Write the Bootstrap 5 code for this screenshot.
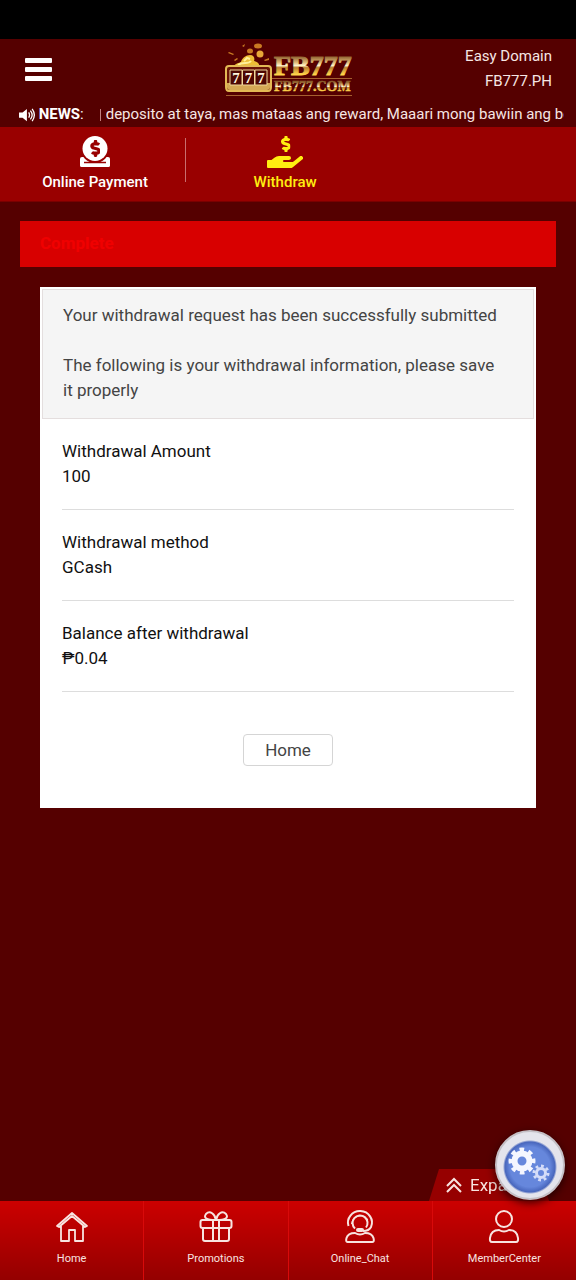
<!DOCTYPE html>
<html lang="en">
<head>
<meta charset="utf-8">
<meta name="viewport" content="width=device-width, initial-scale=1">
<title>Withdraw - FB777</title>
<link href="https://cdn.jsdelivr.net/npm/bootstrap@5.3.0/dist/css/bootstrap.min.css" rel="stylesheet">
<style>
  body { background: #550000; font-family: Roboto, "Liberation Sans", sans-serif; font-size: 17px; line-height: 25px; color: #111; }
  svg { display: block; }
  a { text-decoration: none; }
  .device-bar { background: #000; height: 39px; }
  .site-head { color: #f6e6e4; font-size: 15px; }
  .head-row { display: grid; grid-template-columns: 1fr auto 1fr; padding: 5px 24px 0; }
  .head-row a { color: inherit; }
  .menu-btn { padding: 14px 0; }
  .news { height: 25px; padding: 0 12px 0 18px; }
  .news-title { width: 61px; margin-left: 2px; font-weight: 700; color: #fff; }
  .ticker { min-width: 0; }
  .ticker-cut { width: 1px; height: 12px; background: #c08080; margin-right: 5px; }
  .pay-tabs { background: #990000; height: 75px; border-bottom: 1px solid #7a0000; }
  .pay-tabs a { width: 33%; padding-top: 9px; color: #fff; font-size: 15px; font-weight: 500; line-height: 20px; }
  .pay-tabs a.active { color: #ffee11; }
  .pay-tabs .split { width: 1px; height: 44px; background: #c86e6e; margin: 11px 0 0 -5px; }
  .pay-tabs .split + a { margin-left: 4px; }
  .content { padding: 19px 20px 96px; }
  .step-bar { background: #d80000; color: #f00000; font-size: 17px; font-weight: 700; line-height: 25px; padding: 10px 20px; height: 46px; }
  .result { border: 2px solid #fff; border-radius: 0; background: #fff; margin: 20px 20px 0; }
  .result .card-header { background: #f5f5f5; border: 1px solid #e4dede; border-radius: 0; color: #444; padding: 13px 28px 15px 20px; }
  .result .card-header p + p { margin-top: 25px; }
  .result .info-list { margin: 0 20px; }
  .result .info-list > div { border-bottom: 1px solid #ddd; padding: 20px 0; }
  .result dt, .result dd { font-weight: 400; margin: 0; }
  .result-foot { padding: 42px 0 40px; }
  .btn-home { background: #fff; border: 1px solid #d5d5d5; border-radius: 4px; color: #444; font-size: 17px; line-height: 24px; padding: 3px 21px; }
  .dock-link { background: linear-gradient(#cc0000, #940000); border-right: 1px solid #d80a0a; color: #f8e4e0; font-size: 11px; line-height: 16px; height: 79px; padding-top: 8px; }
  .dock-link:last-child { border-right: 0; }
  .expand { background: #960000; border: 0; color: #f8e4e0; font-size: 17px; line-height: 24px; height: 32px; width: 120px; margin-right: 27px; padding: 0 0 0 17px; clip-path: polygon(10px 0, 110px 0, 100% 100%, 0 100%); }
  .gear-btn { width: 70px; height: 70px; right: 11px; bottom: 80px; border-radius: 50%; border: 2px solid #c4c0c6; background: radial-gradient(circle at 50% 53%, #6687dc 0 20px, #4967bd 25px, #e4e4ec 27px); box-shadow: 0 3px 8px rgba(20, 0, 0, .8); }
</style>
</head>
<body>
<svg width="0" height="0" class="position-absolute" aria-hidden="true">
  <defs>
    <linearGradient id="gold" x1="0" y1="0" x2="0" y2="1">
      <stop offset=".2" stop-color="#8a5c2c"/><stop offset=".4" stop-color="#e0ba78"/><stop offset=".5" stop-color="#fff4cc"/><stop offset=".57" stop-color="#bd8030"/><stop offset=".78" stop-color="#ffd44a"/>
    </linearGradient>
    <symbol id="dollar" viewBox="220 0 152 256">
      <path fill="currentColor" d="M271.06,144.3l54.27,14.3a8.59,8.59,0,0,1,6.63,8.1c0,4.6-4.09,8.4-9.12,8.4h-35.6a30,30,0,0,1-11.19-2.2c-5.24-2.2-11.28-1.7-15.3,2l-19,17.5a11.68,11.68,0,0,0-2.25,2.66,11.42,11.42,0,0,0,3.88,15.74,83.77,83.77,0,0,0,34.51,11.5V240c0,8.8,7.83,16,17.37,16h17.37c9.55,0,17.38-7.2,17.38-16V222.4c32.93-3.6,57.84-31,53.5-63-3.15-23-22.46-41.3-46.56-47.7L282.68,97.4a8.59,8.59,0,0,1-6.63-8.1c0-4.6,4.09-8.4,9.12-8.4h35.6A30,30,0,0,1,332,83.1c5.23,2.2,11.28,1.7,15.3-2l19-17.5A11.31,11.31,0,0,0,368.47,61a11.43,11.43,0,0,0-3.84-15.78,83.82,83.82,0,0,0-34.52-11.5V16c0-8.8-7.82-16-17.37-16H295.37C285.82,0,278,7.2,278,16V33.6c-32.89,3.6-57.85,31-53.51,63C227.63,119.6,247,137.9,271.06,144.3Z"/>
    </symbol>
  </defs>
</svg>

<div class="device-bar"></div>

<header class="site-head">
  <div class="head-row">
    <button type="button" class="btn menu-btn border-0 align-self-start text-start" aria-label="Menu">
      <svg width="28" height="24" viewBox="0 0 28 24" fill="#fff"><rect x="1" width="27" height="5" rx="1"/><rect x="1" y="9" width="27" height="5" rx="1"/><rect x="1" y="18" width="27" height="5" rx="1"/></svg>
    </button>
    <a href="#" aria-label="FB777">
      <svg width="128" height="54" viewBox="-1 2 128 54" overflow="visible">
        <g fill="#c97a22"><ellipse cx="33" cy="4" rx="4" ry="2.500"/><ellipse cx="25" cy="9" rx="3" ry="2.500"/><circle cx="35" cy="12" r="3.500" fill="#e8a838"/><path d="M4 10l5 2-1 1-5-2zM17 4l3-2-1 3zM39 18l5-2v2l-4 1zM9 18l3-2 1 1-3 2z"/></g>
        <path d="M9 24c2-3 5-3 7-4 1-4 5-7 9-7 4 0 5 3 4 6 4 1 6 3 5 6z" fill="#edbd35"/>
        <path d="M13 23c5-4 10 0 13-4M19 19l3-3 3 1" fill="none" stroke="#fff09a" stroke-width="2"/>
        <path d="M4 24h39c2 0 3 1 3 3v18c0 3-1 4-3 4H4c-2 0-3-1-3-4V27c0-2 1-3 3-3z" fill="#691306" stroke="#e3b955" stroke-width="2"/>
        <path d="M2 41h43v4q0 3-3 3H5q-3 0-3-3z" fill="#d4a755"/>
        <g fill="#4d0703" stroke="#f0d79a"><path d="M5 28h12v15H5zM17.500 28h12v15h-12zM30 28h12v15H30z"/></g>
        <g fill="#fff8e0" font-family="Liberation Serif, serif" font-size="15" font-weight="700" text-anchor="middle"><text x="11" y="41">7</text><text x="23.500" y="41">7</text><text x="36" y="41">7</text></g>
        <g fill="url(#gold)" stroke="url(#gold)" stroke-width="1" font-family="Liberation Serif, serif" font-weight="700"><text x="49" y="33" font-size="28">FB777</text><text x="49" y="49" font-size="14" stroke-width=".5">FB777.COM</text></g>
        <path d="M47 36.500h80M1 53.500h126" stroke="#a56030"/>
      </svg>
    </a>
    <div class="text-end"><a href="#" class="d-block">Easy Domain</a><a href="#" class="d-block">FB777.PH</a></div>
  </div>
  <div class="news d-flex align-items-center mt-1">
    <svg width="19" height="14" viewBox="0 0 19 16" aria-hidden="true"><path d="M0 5h4l5-4v14l-5-4H0z" fill="#fff"/><path d="M11 5q2 3 0 6M13 3q4 5 0 10M15 1q5 7 0 14" fill="none" stroke="#fff" stroke-width="1.500"/></svg>
    <div class="news-title flex-shrink-0">NEWS<span class="fw-normal">:</span></div>
    <div class="ticker d-flex align-items-center overflow-hidden text-nowrap flex-grow-1"><span class="ticker-cut flex-shrink-0"></span><span class="flex-grow-1 overflow-hidden">deposito at taya, mas mataas ang reward, Maaari mong bawiin ang bo</span></div>
  </div>
</header>

<nav class="pay-tabs d-flex" aria-label="Payments">
  <a href="#" class="d-flex flex-column align-items-center">
    <svg width="32" height="32" viewBox="0 0 32 32" class="mb-1"><path fill="currentColor" d="M3 21h26q2 0 2 2v6q0 2-2 2H3q-2 0-2-2v-6q0-2 2-2z"/><circle cx="16" cy="13" r="14" fill="#900"/><path d="M1 27h30v2q0 2-2 2H3q-2 0-2-2z" fill="currentColor"/><path d="M5 26.500h22" stroke="#900" stroke-width="1.500"/><circle cx="16" cy="12.500" r="12.500" fill="currentColor"/><use href="#dollar" x="11" y="4" width="10" height="17" color="#900"/></svg>
    Online Payment
  </a>
  <span class="split"></span>
  <a href="#" class="active d-flex flex-column align-items-center">
    <svg width="36" height="32" viewBox="0 0 576 512" class="mb-1"><use href="#dollar" x="220" y="0" width="152" height="256"/><path fill="currentColor" d="M565.27,328.1c-11.8-10.7-30.2-10-42.6,0L430.27,402a63.64,63.64,0,0,1-40,14H272a16,16,0,0,1,0-32h78.29c15.9,0,30.71-10.9,33.25-26.6a31.2,31.2,0,0,0,.46-5.46A32,32,0,0,0,352,320H192a117.66,117.66,0,0,0-74.1,26.29L71.4,384H16A16,16,0,0,0,0,400v96a16,16,0,0,0,16,16H372.77a64,64,0,0,0,40-14L564,377a32,32,0,0,0,1.28-48.9Z"/></svg>
    Withdraw
  </a>
</nav>

<main class="content">
  <h1 class="step-bar m-0">Complete</h1>
  <section class="card result">
    <div class="card-header">
      <p class="mb-0">Your withdrawal request has been successfully submitted</p>
      <p class="mb-0">The following is your withdrawal information, please save it properly</p>
    </div>
    <dl class="info-list">
      <div><dt>Withdrawal Amount</dt><dd>100</dd></div>
      <div><dt>Withdrawal method</dt><dd>GCash</dd></div>
      <div><dt>Balance after withdrawal</dt><dd>₱0.04</dd></div>
    </dl>
    <div class="result-foot d-flex justify-content-center"><button type="button" class="btn btn-home">Home</button></div>
  </section>
</main>

<footer class="fixed-bottom">
  <div class="d-flex justify-content-end">
    <button type="button" class="expand d-flex align-items-center text-nowrap">
      <svg width="16" height="16" viewBox="0 0 16 16" fill="none" stroke="currentColor" stroke-width="2" class="me-2"><path d="M1 9l7-7 7 7M1 15l7-7 7 7"/></svg>Expand
    </button>
  </div>
  <nav class="row g-0 text-center" aria-label="Main">
    <a href="#" class="col dock-link d-flex flex-column align-items-center">
      <svg width="34" height="34" viewBox="0 0 34 34" fill="none" stroke="currentColor" stroke-width="2" class="mb-2"><path d="M2 17L17 4l15 13-2 1L17 7 4 18zM6 17v15h8V21h6v11h8V17" stroke-linejoin="round" stroke-width="1.800"/></svg>
      Home
    </a>
    <a href="#" class="col dock-link d-flex flex-column align-items-center">
      <svg width="34" height="34" viewBox="0 0 34 34" fill="none" stroke="currentColor" stroke-width="2" class="mb-2"><rect x="1.500" y="11" width="31" height="8" rx="2"/><path d="M4 19v11q0 2 2 2h22q2 0 2-2V19M14 11v21M20 11v21M16 11C8 11 4 9 7 5c4-4 9 0 10 6 1-6 6-10 10-6 3 4-1 6-9 6"/></svg>
      Promotions
    </a>
    <a href="#" class="col dock-link d-flex flex-column align-items-center">
      <svg width="34" height="34" viewBox="0 0 34 34" fill="none" stroke="currentColor" stroke-width="2" class="mb-2"><path d="M5.500 17A12 11.500 0 1 1 28 18q-2 4-8 4" /><path d="M12 19.500A7.500 7.500 0 1 1 23 18.500"/><path d="M8.500 15A9 9 0 0 1 25 11" stroke-width="1"/><rect x="13" y="19" width="8" height="4" rx="2" fill="currentColor" stroke="none"/><path d="M12 24q-7 0-8.500 5-1 4 1 4h25q2 0 1-4-1.500-5-8.500-5-5 3-10 0z"/></svg>
      Online_Chat
    </a>
    <a href="#" class="col dock-link d-flex flex-column align-items-center">
      <svg width="34" height="34" viewBox="0 0 34 34" fill="none" stroke="currentColor" stroke-width="2" class="mb-2"><circle cx="17" cy="10" r="8"/><path d="M12 21q-8 0-9 8-.5 4 2 4h24q2.500 0 2-4-1-8-9-8-5 3-10 0z"/></svg>
      MemberCenter
    </a>
  </nav>
  <button type="button" class="gear-btn position-absolute p-0" aria-label="Settings">
    <svg width="66" height="66" viewBox="0 0 66 66" fill="none" stroke="#f4f6ff"><circle cx="25" cy="29" r="7.500" stroke-width="6"/><circle cx="25" cy="29" r="11.500" stroke-width="4" pathLength="80" stroke-dasharray="5 5" transform="rotate(-12 25 29)"/><g stroke="#d4dcf8"><circle cx="44" cy="41" r="4.500" stroke-width="3"/><circle cx="44" cy="41" r="7" stroke-width="3" pathLength="80" stroke-dasharray="5 5"/></g></svg>
  </button>
</footer>
<script src="https://cdn.jsdelivr.net/npm/bootstrap@5.3.0/dist/js/bootstrap.bundle.min.js"></script>
</body>
</html>
